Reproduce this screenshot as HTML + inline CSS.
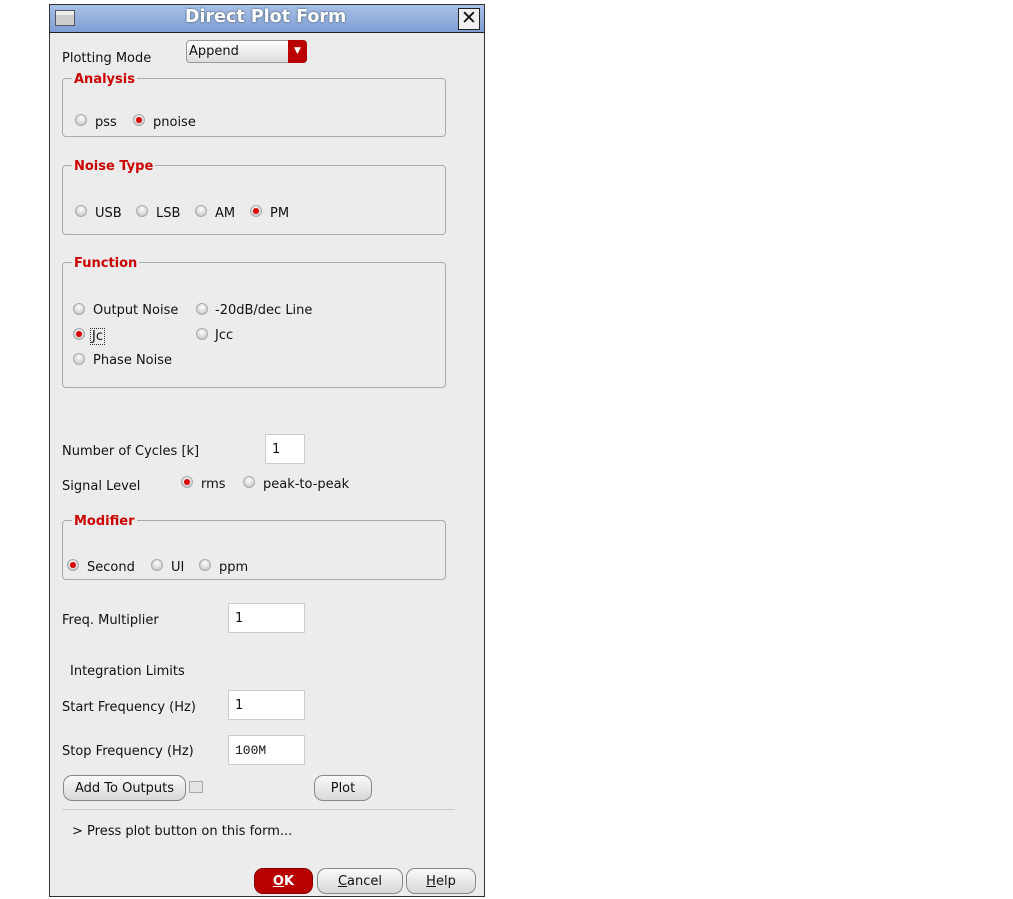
<!DOCTYPE html>
<html><head><style>
body{margin:0;width:1013px;height:899px;background:#fff;position:relative;font-family:"DejaVu Sans","Liberation Sans",sans-serif;font-size:13px;color:#111;overflow:hidden}
.a{position:absolute;white-space:nowrap}
.t{margin-top:1px}
.win{position:absolute;left:49px;top:4px;width:436px;height:893px;border:1px solid #333;background:#ececec;box-sizing:border-box}
.tb{position:absolute;left:50px;top:5px;width:434px;height:27px;background:linear-gradient(#a9c1e6,#7e9ed3);border-bottom:1px solid #222}
.grp{position:absolute;border:1px solid #aaa;border-radius:4px;left:62px;width:384px;box-sizing:border-box}
.lg{position:absolute;font-weight:bold;color:#c00;background:#ececec;font-size:13px;margin-top:1px}
.r{position:absolute;width:12px;height:12px;border-radius:50%;background:radial-gradient(circle at 50% 35%,#fff,#bbb);border:1px solid #aaa;box-sizing:border-box}
.r.on:after{content:"";position:absolute;left:2px;top:2px;width:6px;height:6px;border-radius:50%;background:#d00}
.in{position:absolute;background:#fff;border:1px solid #ccc;box-sizing:border-box;height:30px;padding:7px 6px;font-size:13px}
.bt{position:absolute;border:1px solid #888;border-radius:9px;background:linear-gradient(#fafafa,#d8d8d8);text-align:center;box-sizing:border-box;height:26px;line-height:26px;font-size:13px}
</style></head><body>
<div class="win"></div>
<div class="tb"></div>
<div class="a" style="left:55px;top:10px;width:18px;height:14px;border:1px solid #556;background:linear-gradient(#eee 30%,#ccc 30%)"></div>
<div class="a" style="left:185px;top:7px;font-weight:bold;font-size:17.5px;color:#fff;text-shadow:0 0 2px #345">Direct Plot Form</div>
<div class="a" style="left:458px;top:8px;width:20px;height:20px;border:1px solid #222;background:#f0f0f0;font-size:19px;line-height:19px;text-align:center;font-weight:bold">✕</div>

<div class="a t" style="left:62px;top:50px">Plotting Mode</div>
<div class="a" style="left:186px;top:40px;width:121px;height:23px;border:1px solid #999;border-radius:4px;background:linear-gradient(#fff,#ddd);box-sizing:border-box;padding:3px 2px">Append</div>
<div class="a" style="left:288px;top:40px;width:19px;height:23px;border-radius:0 4px 4px 0;background:#b00;color:#fff;font-size:9px;text-align:center;line-height:23px">▼</div>

<div class="grp" style="top:78px;height:59px"></div><div class="lg a" style="left:72px;top:71px;padding:0 2px">Analysis</div>
<div class="r" style="left:75px;top:114px"></div><div class="a t" style="left:95px;top:114px">pss</div>
<div class="r on" style="left:133px;top:114px"></div><div class="a t" style="left:153px;top:114px">pnoise</div>

<div class="grp" style="top:165px;height:70px"></div><div class="lg a" style="left:72px;top:158px;padding:0 2px">Noise Type</div>
<div class="r" style="left:75px;top:205px"></div><div class="a t" style="left:95px;top:205px">USB</div>
<div class="r" style="left:136px;top:205px"></div><div class="a t" style="left:156px;top:205px">LSB</div>
<div class="r" style="left:195px;top:205px"></div><div class="a t" style="left:215px;top:205px">AM</div>
<div class="r on" style="left:250px;top:205px"></div><div class="a t" style="left:270px;top:205px">PM</div>

<div class="grp" style="top:262px;height:126px"></div><div class="lg a" style="left:72px;top:255px;padding:0 2px">Function</div>
<div class="r" style="left:73px;top:303px"></div><div class="a t" style="left:93px;top:302px">Output Noise</div>
<div class="r" style="left:196px;top:303px"></div><div class="a t" style="left:215px;top:302px">-20dB/dec Line</div>
<div class="r on" style="left:73px;top:328px"></div><div class="a t" style="left:90px;top:327px;border:1px dotted #333;padding:0 1px">Jc</div>
<div class="r" style="left:196px;top:328px"></div><div class="a t" style="left:215px;top:327px">Jcc</div>
<div class="r" style="left:73px;top:353px"></div><div class="a t" style="left:93px;top:352px">Phase Noise</div>

<div class="a t" style="left:62px;top:443px">Number of Cycles [k]</div>
<div class="in" style="left:265px;top:434px;width:40px">1</div>
<div class="a t" style="left:62px;top:478px">Signal Level</div>
<div class="r on" style="left:181px;top:476px"></div><div class="a t" style="left:201px;top:476px">rms</div>
<div class="r" style="left:243px;top:476px"></div><div class="a t" style="left:263px;top:476px">peak-to-peak</div>

<div class="grp" style="top:520px;height:60px"></div><div class="lg a" style="left:72px;top:513px;padding:0 2px">Modifier</div>
<div class="r on" style="left:67px;top:559px"></div><div class="a t" style="left:87px;top:559px">Second</div>
<div class="r" style="left:151px;top:559px"></div><div class="a t" style="left:171px;top:559px">UI</div>
<div class="r" style="left:199px;top:559px"></div><div class="a t" style="left:219px;top:559px">ppm</div>

<div class="a t" style="left:62px;top:612px">Freq. Multiplier</div>
<div class="in" style="left:228px;top:603px;width:77px">1</div>
<div class="a t" style="left:70px;top:663px">Integration Limits</div>
<div class="a t" style="left:62px;top:699px">Start Frequency (Hz)</div>
<div class="in" style="left:228px;top:690px;width:77px">1</div>
<div class="a t" style="left:62px;top:743px">Stop Frequency (Hz)</div>
<div class="in" style="left:228px;top:735px;width:77px;font-family:'Liberation Mono',monospace">100M</div>

<div class="bt" style="left:63px;top:775px;width:123px">Add To Outputs</div>
<div class="a" style="left:189px;top:781px;width:12px;height:10px;border:1px solid #aaa;background:#e4e4e4"></div>
<div class="bt" style="left:314px;top:775px;width:58px">Plot</div>
<div class="a" style="left:62px;top:809px;width:393px;height:1px;background:#ccc"></div>
<div class="a t" style="left:72px;top:823px">&gt; Press plot button on this form...</div>

<div class="bt" style="left:254px;top:868px;width:59px;background:#b80000;border-color:#800;color:#fff;font-weight:bold"><u>O</u>K</div>
<div class="bt" style="left:317px;top:868px;width:86px"><u>C</u>ancel</div>
<div class="bt" style="left:406px;top:868px;width:70px"><u>H</u>elp</div>
</body></html>
